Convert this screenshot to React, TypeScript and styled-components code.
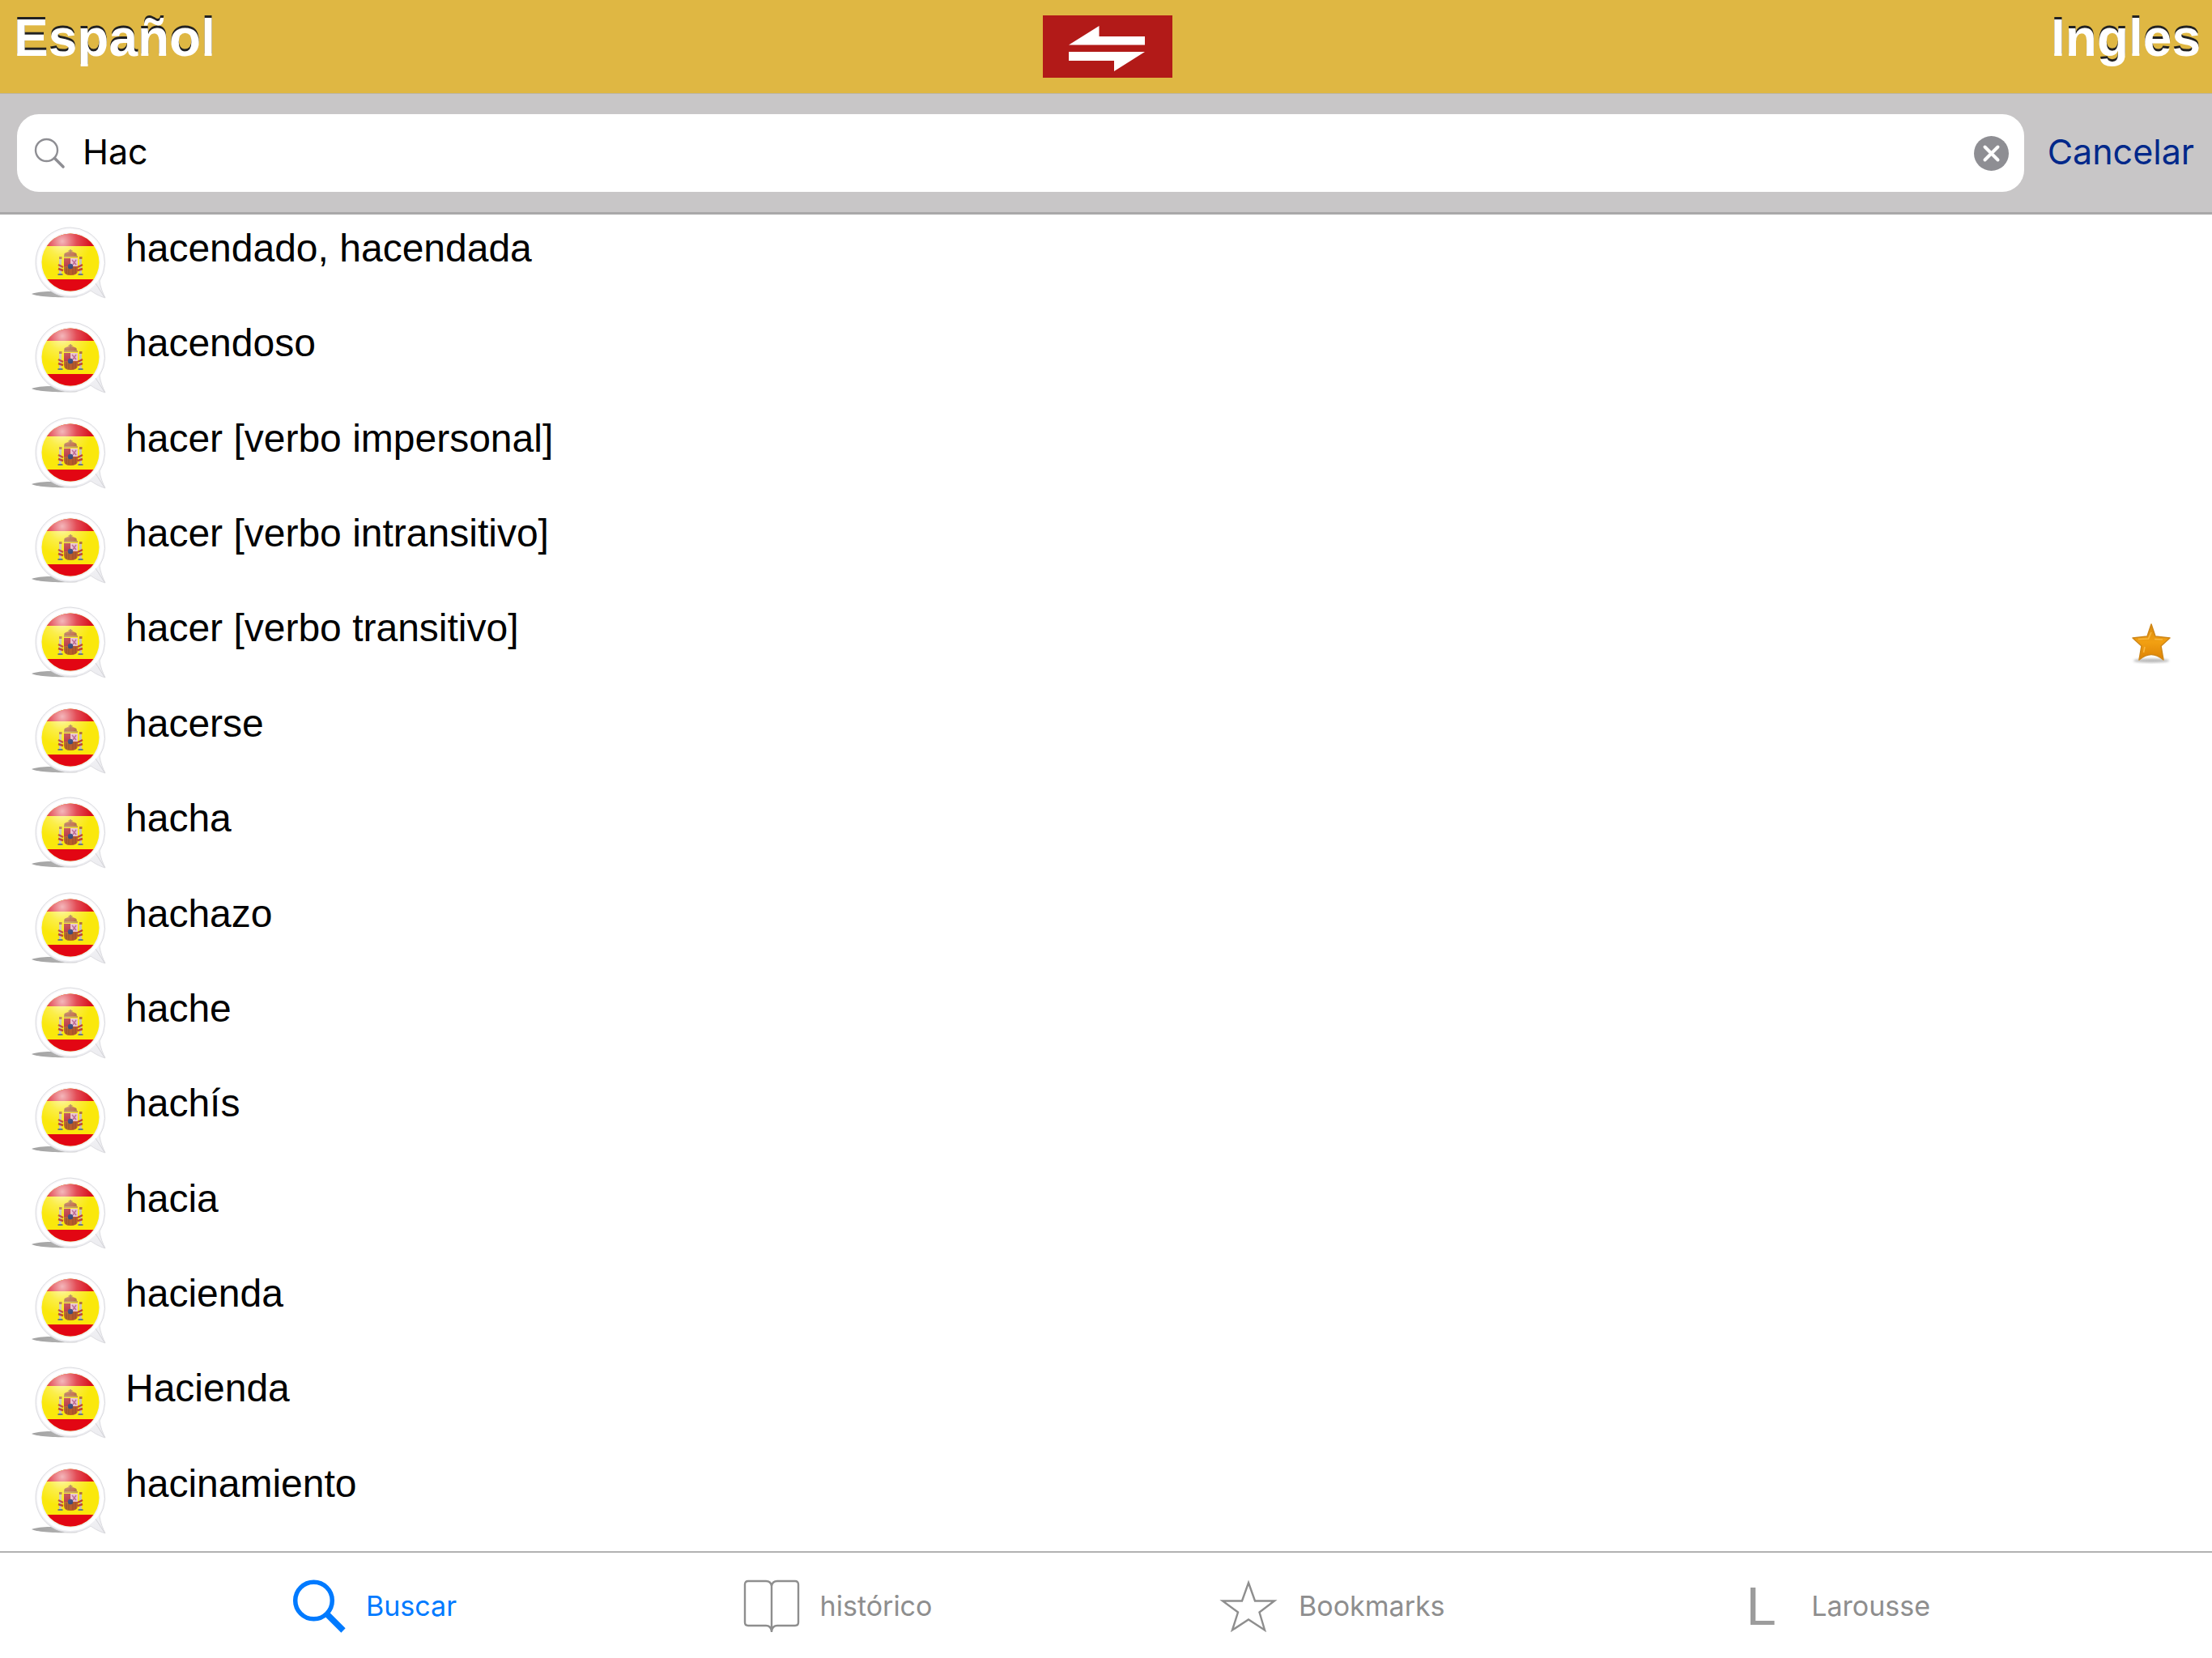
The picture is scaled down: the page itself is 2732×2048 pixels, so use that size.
import React, { useState } from "react";
import styled, { createGlobalStyle } from "styled-components";

const helvetica = `"Liberation Sans", Arial, Helvetica, sans-serif`;
const system = `Inter, "Noto Sans", sans-serif`;

const GlobalStyle = createGlobalStyle`
  *, *::before, *::after { box-sizing: border-box; }
  body { margin: 0; background: #fff; color: #000; font-family: ${helvetica}; }
  button, input { font: inherit; color: inherit; margin: 0; padding: 0; border: 0; background: none; }
  button { cursor: pointer; }
  svg { display: block; flex: none; }
`;

const Page = styled.div`
  display: flex;
  flex-direction: column;
  min-height: 100vh;
`;

const Header = styled.header`
  display: grid;
  grid-template-columns: 1fr auto 1fr;
  align-items: start;
  height: 115px;
  padding: 0 14px 0 17px;
  background: #dfb743;
`;

const Language = styled.span<{ $end?: boolean }>`
  padding-top: 10px;
  font-size: 64px;
  line-height: 74px;
  font-weight: 700;
  color: #fff;
  text-shadow: 0 -3px 0 #222;
  text-align: ${(p) => (p.$end ? "right" : "left")};
`;

const SwapButton = styled.button`
  display: flex;
  align-items: center;
  justify-content: center;
  width: 160px;
  height: 77px;
  margin-top: 19px;
  padding-top: 5px;
  background: #b21a18;
`;

const SearchBar = styled.form`
  display: flex;
  align-items: center;
  gap: 29px;
  height: 150px;
  padding: 0 22px 0 21px;
  background: #c8c6c7;
  border-top: 1px solid #bcb5a4;
  border-bottom: 3px solid #a9a8a9;
  font-family: ${system};
  font-size: 43px;
`;

const Field = styled.label`
  display: flex;
  flex: 1;
  align-items: center;
  gap: 21px;
  height: 96px;
  padding: 0 19px 0 21px;
  border-radius: 27px;
  background: #fff;
`;

const FieldInput = styled.input`
  flex: 1;
  min-width: 0;
  height: 60px;
  padding-bottom: 4px;
  outline: none;
  appearance: none;
`;

const CancelButton = styled.button`
  padding-bottom: 4px;
  color: #00288a;
  line-height: 56px;
`;

const Results = styled.ul`
  display: flex;
  flex: 1;
  flex-direction: column;
  margin: 0;
  padding: 0 0 8px;
  list-style: none;
`;

const Row = styled.li`
  display: flex;
  flex: 1;
  align-items: flex-start;
  gap: 23px;
  min-height: 106px;
  padding: 15px 49px 0 38px;
`;

const Word = styled.a`
  flex: 1;
  font-size: 48px;
  line-height: 54px;
  color: #000;
  text-decoration: none;
`;

const Favourite = styled.span`
  align-self: center;
  padding-bottom: 14px;
`;

const TabBar = styled.nav`
  display: flex;
  align-items: center;
  justify-content: space-between;
  height: 132px;
  padding: 2px 348px 0 361px;
  border-top: 2px solid #b2b2b2;
  font-family: ${system};
`;

const Tab = styled.button<{ $active?: boolean }>`
  display: flex;
  align-items: center;
  gap: 25px;
  font-size: 34px;
  line-height: 44px;
  color: ${(p) => (p.$active ? "#007aff" : "#8e8e8e")};
`;

const LetterIcon = styled.span`
  width: 74px;
  font-family: ${helvetica};
  font-size: 67px;
  line-height: 72px;
  text-align: center;
  color: #9c9c9c;
`;

const SwapIcon = () => (
  <svg width="96" height="56" viewBox="0 0 96 56" fill="#fff" aria-hidden="true">
    <path d="M0 23.500 L37.500 0 V13 H94 V23.500 Z" />
    <path d="M0 32 H94 L56 56 V43 H0 Z" />
  </svg>
);

const LensIcon = () => (
  <svg width="39" height="39" viewBox="0 0 39 39" fill="none" stroke="#8e8e93" aria-hidden="true">
    <circle cx="15.500" cy="15.500" r="13.500" strokeWidth="2.400" />
    <path d="M25.500 25.500 L36 36" strokeWidth="3.600" strokeLinecap="round" />
  </svg>
);

const ClearIcon = () => (
  <svg width="43" height="43" viewBox="0 0 43 43" aria-hidden="true">
    <circle cx="21.500" cy="21.500" r="21.500" fill="#8e8e93" />
    <path d="M13.500 13.500 L29.500 29.500 M29.500 13.500 L13.500 29.500" stroke="#fff" strokeWidth="4" strokeLinecap="round" />
  </svg>
);

const FlagDefs = () => (
  <svg width="0" height="0" style={{ position: "absolute" }} aria-hidden="true">
    <defs>
      <radialGradient id="gloss" cx="0.36" cy="0.14" r="0.5">
        <stop offset="0" stopColor="#fff" stopOpacity="0.7" />
        <stop offset="0.5" stopColor="#fff" stopOpacity="0.25" />
        <stop offset="1" stopColor="#fff" stopOpacity="0" />
      </radialGradient>
      <linearGradient id="ring" x1="0" y1="0" x2="0" y2="1">
        <stop offset="0" stopColor="#f8f8fa" />
        <stop offset="0.6" stopColor="#f4f4f7" />
        <stop offset="1" stopColor="#ececf0" />
      </linearGradient>
      <linearGradient id="cast" x1="0" y1="0" x2="1" y2="0">
        <stop offset="0" stopColor="#a2a2a2" />
        <stop offset="1" stopColor="#b8b8b8" />
      </linearGradient>
      <clipPath id="disc">
        <circle cx="49" cy="44" r="35.500" />
      </clipPath>
      <linearGradient id="gold" x1="0" y1="0" x2="0" y2="1">
        <stop offset="0" stopColor="#d98a10" />
        <stop offset="0.5" stopColor="#f2a012" />
        <stop offset="1" stopColor="#dd8205" />
      </linearGradient>
      <filter id="soft" x="-20%" y="-100%" width="140%" height="300%">
        <feGaussianBlur stdDeviation="1.500" />
      </filter>
      <g id="flag">
        <path d="M1 83 C12 79 34 79 52 83 L58 87 C40 88 8 87 1 83 Z" fill="url(#cast)" />
        <path
          d="M49 1 A43 43 0 0 1 85 67 C86 75 89 82 92 88 C85 86 78 82 74 79 A43 43 0 1 1 49 1 Z"
          fill="url(#ring)"
          stroke="#dcdce0"
          strokeWidth="1"
        />
        <circle cx="49" cy="44" r="39" fill="none" stroke="#fff" strokeWidth="4" />
        <path d="M80 70 L91 87" stroke="#d4d4d8" strokeWidth="1" />
        <g clipPath="url(#disc)">
          <rect x="10" y="8" width="80" height="72" fill="#fae80c" />
          <rect x="10" y="8" width="80" height="16" fill="#d90f1c" />
          <rect x="10" y="65" width="80" height="16" fill="#e20613" />
          <path d="M41 36 Q41 31 49 31 Q57 31 57 36 Z" fill="#b5532c" />
          <path d="M49 28 V34 M46.500 30 H51.500 M42 33 L44 36 M56 33 L54 36" stroke="#9a5a2a" strokeWidth="1.500" />
          <path d="M41 37 H58" stroke="#b8893a" strokeWidth="2" />
          <path d="M41 39 H49 V49 H41 Z" fill="#b8323a" />
          <path d="M49 39 H58 V49 H49 Z" fill="#e6bccb" />
          <path d="M51 41 L56 47 M56 41 L52 47" stroke="#b8608c" strokeWidth="1.500" />
          <path d="M41 49 H49 V60 Q41 60 41 54 Z" fill="#b5652a" />
          <path d="M49 49 H58 V54 Q58 60 49 60 Z" fill="#bb5a2c" />
          <path d="M44 50 V58 M47 50 V59 M52 50 V59 M55 50 V58" stroke="#94502a" strokeWidth="1" />
          <circle cx="49" cy="49" r="3.200" fill="#37477c" />
          <path d="M36.500 40 V58 M61.500 40 V58" stroke="#c9c3b0" strokeWidth="3" />
          <path d="M35 38.500 H38.500 M60 38.500 H63.500" stroke="#b06a2c" strokeWidth="3" />
          <path d="M34 47 L40 50 M34 52 L40 54 M64 47 L58 50 M64 52 L58 54" stroke="#c2452e" strokeWidth="2.400" />
          <path d="M33.500 59 H39.500 M58.500 59 H64.500" stroke="#6f7a80" strokeWidth="2.200" />
          <circle cx="49" cy="44" r="36" fill="url(#gloss)" />
        </g>
      </g>
    </defs>
  </svg>
);

const FlagIcon = () => (
  <svg width="94" height="90" viewBox="0 0 94 90" role="img" aria-label="Español">
    <use href="#flag" />
  </svg>
);

const StarIcon = () => (
  <svg width="52" height="52" viewBox="0 0 52 52" role="img" aria-label="Bookmark">
    <ellipse cx="26" cy="48" rx="22" ry="2.500" fill="#999" opacity="0.7" filter="url(#soft)" />
    <path
      d="M26 3 L31 18 L49 20 L38 30 L41 47 Q33 40.500 26 40.500 Q19 40.500 11 47 L14 30 L3 20 L21 18 Z"
      fill="url(#gold)"
      stroke="#cf8718"
      strokeWidth="1.500"
      strokeLinejoin="round"
    />
    <path d="M10 21.500 L22.500 21 L26 13 M30 21.500 L40 22 M18 31 L16.500 38" stroke="#f8b840" strokeWidth="1.600" fill="none" />
  </svg>
);

const SearchTabIcon = () => (
  <svg width="66" height="66" viewBox="0 0 66 66" fill="none" stroke="currentColor" strokeWidth="5.500" aria-hidden="true">
    <circle cx="26.500" cy="26" r="22.800" />
    <path d="M42 42 L63 63" strokeWidth="7.500" />
  </svg>
);

const BookIcon = () => (
  <svg width="70" height="66" viewBox="0 0 70 66" fill="none" stroke="currentColor" strokeWidth="2.400" aria-hidden="true">
    <path d="M35 65 V8 Q34 2 28 2 H6 Q2 2 2 6 V53 Q2 57 6 57 H28 Q34 57 35 64 Q36 57 42 57 H64 Q68 57 68 53 V6 Q68 2 64 2 H42 Q36 2 35 8" />
  </svg>
);

const StarTabIcon = () => (
  <svg width="74" height="66" viewBox="0 0 74 66" fill="none" stroke="currentColor" strokeWidth="2.400" aria-hidden="true">
    <path d="M37 4 L45 26.500 H69 L50.500 40.500 L57 62.500 L37 49.500 L17 62.500 L24 40.500 L5 26.500 H29 Z" />
  </svg>
);

const words = [
  "hacendado, hacendada",
  "hacendoso",
  "hacer [verbo impersonal]",
  "hacer [verbo intransitivo]",
  "hacer [verbo transitivo]",
  "hacerse",
  "hacha",
  "hachazo",
  "hache",
  "hachís",
  "hacia",
  "hacienda",
  "Hacienda",
  "hacinamiento",
];

const bookmarked = new Set(["hacer [verbo transitivo]"]);

const tabs = [
  { label: "Buscar", icon: <SearchTabIcon /> },
  { label: "histórico", icon: <BookIcon /> },
  { label: "Bookmarks", icon: <StarTabIcon /> },
  { label: "Larousse", icon: <LetterIcon aria-hidden="true">L</LetterIcon> },
];

export default function App() {
  const [query, setQuery] = useState("Hac");
  const [activeTab, setActiveTab] = useState("Buscar");

  return (
    <Page>
      <GlobalStyle />
      <FlagDefs />
      <Header>
        <Language>Español</Language>
        <SwapButton type="button" aria-label="Cambiar idioma">
          <SwapIcon />
        </SwapButton>
        <Language $end>Ingles</Language>
      </Header>
      <SearchBar role="search" onSubmit={(e) => e.preventDefault()}>
        <Field>
          <LensIcon />
          <FieldInput
            type="text"
            aria-label="Buscar"
            value={query}
            onChange={(e) => setQuery(e.target.value)}
          />
          <button type="button" aria-label="Borrar" onClick={() => setQuery("")}>
            <ClearIcon />
          </button>
        </Field>
        <CancelButton type="button">Cancelar</CancelButton>
      </SearchBar>
      <Results>
        {words.map((word) => (
          <Row key={word}>
            <FlagIcon />
            <Word href="#">{word}</Word>
            {bookmarked.has(word) && (
              <Favourite>
                <StarIcon />
              </Favourite>
            )}
          </Row>
        ))}
      </Results>
      <TabBar>
        {tabs.map(({ label, icon }) => (
          <Tab key={label} type="button" $active={label === activeTab} onClick={() => setActiveTab(label)}>
            {icon}
            {label}
          </Tab>
        ))}
      </TabBar>
    </Page>
  );
}
